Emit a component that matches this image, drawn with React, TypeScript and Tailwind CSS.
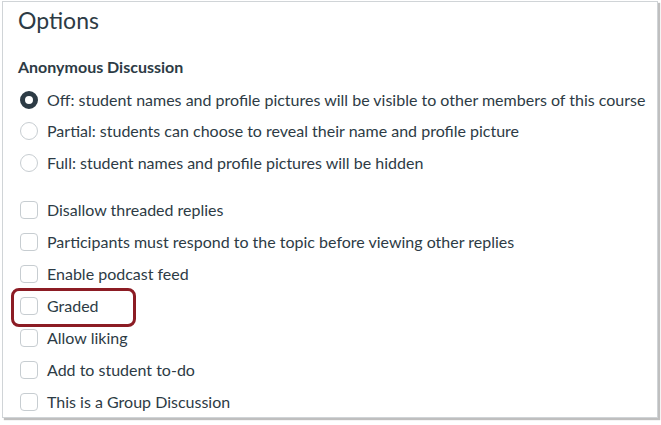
import React from "react";

const radios = [
  { label: "Off: student names and profile pictures will be visible to other members of this course", checked: true },
  { label: "Partial: students can choose to reveal their name and profile picture", checked: false },
  { label: "Full: student names and profile pictures will be hidden", checked: false },
];

const checks = [
  "Disallow threaded replies",
  "Participants must respond to the topic before viewing other replies",
  "Enable podcast feed",
  "Graded",
  "Allow liking",
  "Add to student to-do",
  "This is a Group Discussion",
];

function Radio({ checked }: { checked: boolean }) {
  if (checked) {
    return <span className="w-[18px] h-[18px] rounded-full border-[5px] border-[#2d3b45] bg-white shrink-0" />;
  }
  return <span className="w-[18px] h-[18px] rounded-full border border-[#c7cdd1] bg-white shrink-0" />;
}

function Checkbox() {
  return <span className="w-[18px] h-[18px] rounded-[4px] border border-[#c7cdd1] bg-white shrink-0" />;
}

export default function App() {
  return (
    <div className="w-[661px] h-[425px] bg-white" style={{ fontFamily: "Lato, 'Liberation Sans', sans-serif" }}>
      <div className="ml-[2px] mt-[1px] w-[656px] h-[417px] border border-[#d0d4d7] shadow-[2px_2px_1px_rgba(0,0,0,0.25)] bg-white pl-[15px] text-[#2d3b45]">
        <h2 className="text-[23px] leading-[28px] pt-[4px]">Options</h2>
        <div className="mt-[22px] text-[16px] font-bold leading-[22px]">Anonymous Discussion</div>
        <div className="mt-[6px] flex flex-col">
          {radios.map((r) => (
            <div key={r.label} className="h-[31.5px] flex items-center gap-[9px] pl-[2px] text-[16px]">
              <Radio checked={r.checked} />
              <span>{r.label}</span>
            </div>
          ))}
        </div>
        <div className="mt-[15px] flex flex-col">
          {checks.map((c) => (
            <div key={c} className="relative h-[32px] flex items-center gap-[9px] pl-[2px] text-[16px]">
              <Checkbox />
              <span>{c}</span>
              {c === "Graded" && (
                <span className="absolute left-[-7px] top-[-2px] w-[125px] h-[39px] rounded-[8px] border-[3px] border-[#8c1c24]" />
              )}
            </div>
          ))}
        </div>
      </div>
    </div>
  );
}
